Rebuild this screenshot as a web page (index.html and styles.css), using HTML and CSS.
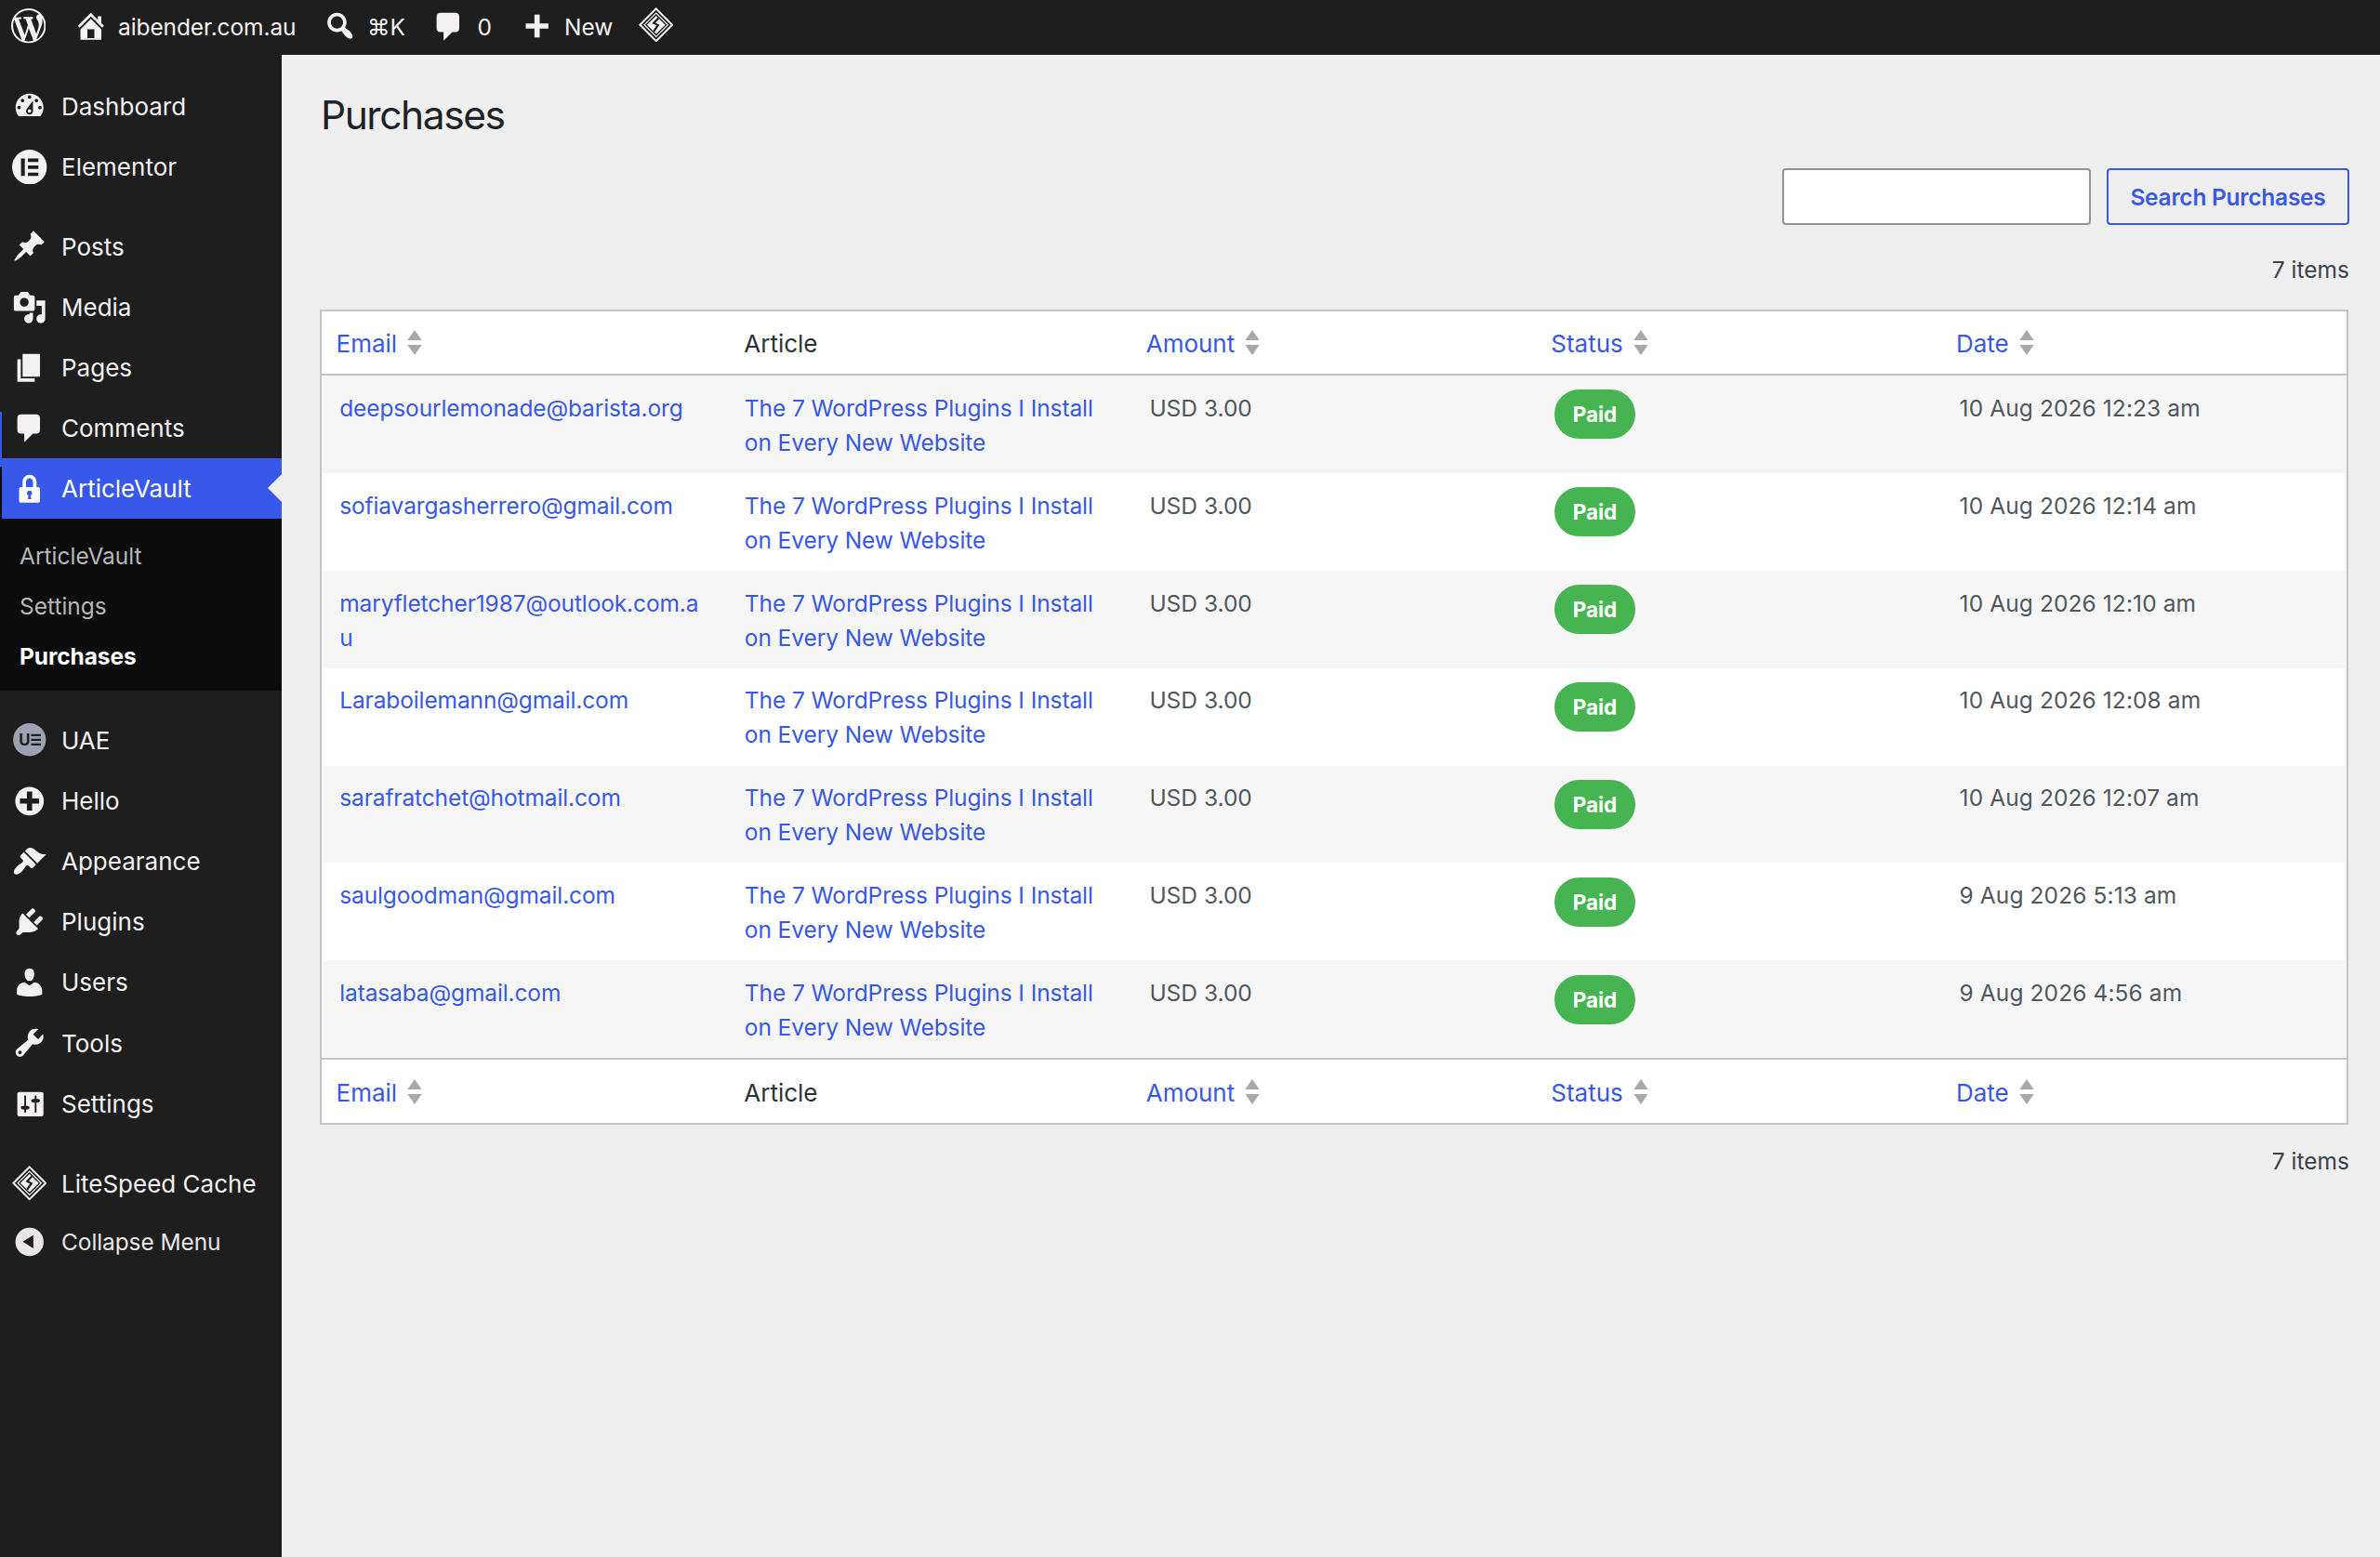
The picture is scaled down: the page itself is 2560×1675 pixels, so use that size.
FILE: index.html
```html
<!DOCTYPE html>
<html lang="en">
<head>
  <meta charset="UTF-8">
  <meta name="viewport" content="width=device-width, initial-scale=1.0">
  <title>Purchases</title>
  <link rel="stylesheet" href="styles.css">
</head>
<body>
  <svg class="sprite">
    <symbol id="i-wordpress" viewBox="0 0 20 20"><path d="M20 10c0-5.51-4.49-10-10-10C4.48 0 0 4.49 0 10c0 5.52 4.48 10 10 10 5.51 0 10-4.48 10-10zM7.78 15.37L4.37 6.22c.55-.02 1.17-.08 1.17-.08.5-.06.44-1.13-.06-1.11 0 0-1.45.11-2.37.11-.18 0-.37 0-.58-.01C4.12 2.69 6.87 1.11 10 1.11c2.33 0 4.45.87 6.05 2.34-.68-.11-1.65.39-1.65 1.58 0 .74.45 1.36.9 2.1.35.61.55 1.36.55 2.46 0 1.49-1.4 5-1.4 5l-3.03-8.37c.54-.02.82-.17.82-.17.5-.05.44-1.25-.06-1.22 0 0-1.44.12-2.38.12-.87 0-2.33-.12-2.33-.12-.5-.03-.56 1.2-.06 1.22l.92.08 1.26 3.41zM17.41 10c.24-.64.74-1.87.43-4.25.7 1.29 1.05 2.71 1.05 4.25 0 3.29-1.73 6.24-4.4 7.78.97-2.59 1.94-5.2 2.92-7.78zM6.1 18.09C3.12 16.65 1.11 13.53 1.11 10c0-1.3.23-2.48.72-3.59C3.25 10.3 4.67 14.2 6.1 18.09zm4.03-6.63l2.58 6.98c-.86.29-1.76.45-2.71.45-.79 0-1.57-.11-2.29-.33.81-2.38 1.62-4.74 2.42-7.1z"/></symbol>
    <symbol id="i-home" viewBox="0 0 20 20"><path d="M16 8.5l1.53 1.53-1.06 1.06L10 4.6l-6.47 6.49-1.06-1.06L10 2.5l4 4v-2h2v4zm-6-2.46l6 5.99V18H4v-5.97zM12 17v-5H8v5h4z"/></symbol>
    <symbol id="i-search" viewBox="0 0 20 20"><path d="M12.14 4.18c1.87 1.87 2.11 4.75.72 6.89.12.1.22.21.36.31.2.16.47.36.81.59.34.24.56.39.66.47.42.31.73.57.94.78.32.32.6.65.84 1 .25.35.44.69.59 1.04.14.35.21.68.18 1-.02.32-.14.59-.36.81s-.49.34-.81.36c-.31.02-.65-.04-.99-.19-.35-.14-.7-.34-1.04-.59-.35-.24-.68-.52-1-.84-.21-.21-.47-.52-.77-.93-.1-.13-.25-.35-.47-.66-.22-.32-.4-.57-.56-.78-.16-.2-.29-.35-.44-.5-2.07 1.09-4.69.76-6.44-.98-2.14-2.15-2.14-5.64 0-7.78 2.15-2.15 5.63-2.15 7.78 0zm-1.41 6.36c1.36-1.37 1.36-3.58 0-4.95-1.37-1.37-3.59-1.37-4.95 0-1.37 1.37-1.37 3.58 0 4.95 1.36 1.37 3.58 1.37 4.95 0z"/></symbol>
    <symbol id="i-comment" viewBox="0 0 20 20"><path d="M5 2h9c1.1 0 2 .9 2 2v7c0 1.1-.9 2-2 2h-2l-5 5v-5H5c-1.1 0-2-.9-2-2V4c0-1.1.9-2 2-2z"/></symbol>
    <symbol id="i-plus" viewBox="0 0 20 20"><path d="M17 7v3h-5v5H9v-5H4V7h5V2h3v5h5z"/></symbol>
    <symbol id="i-litespeed" viewBox="0 0 38 38">
      <path d="M19 1.4L36.6 19 19 36.6 1.4 19z" fill="none" stroke="currentColor" stroke-width="2.1"/>
      <path d="M19 6.2L31.8 19 19 31.8 6.2 19z" fill="none" stroke="currentColor" stroke-width="1.3"/>
      <path d="M19 9L29 19 19 29 9 19z"/>
      <path d="M21.6 11.6l-5.2 5.3 4.6 2.4-4.6 7" fill="none" stroke="#1e1e1e" stroke-width="2.2"/>
    </symbol>
    <symbol id="i-dashboard" viewBox="0 0 20 20"><path d="M3.76 16h12.48c1.1-1.37 1.76-3.11 1.76-5 0-4.42-3.58-8-8-8s-8 3.58-8 8c0 1.89.66 3.63 1.76 5zM10 4c.55 0 1 .45 1 1s-.45 1-1 1-1-.45-1-1 .45-1 1-1zM6 6c.55 0 1 .45 1 1s-.45 1-1 1-1-.45-1-1 .45-1 1-1zm8 0c.55 0 1 .45 1 1s-.45 1-1 1-1-.45-1-1 .45-1 1-1zm-5.37 5.55L12 7v6c0 1.1-.9 2-2 2s-2-.9-2-2c0-.57.24-1.08.63-1.45zM4 10c.55 0 1 .45 1 1s-.45 1-1 1-1-.45-1-1 .45-1 1-1zm12 0c.55 0 1 .45 1 1s-.45 1-1 1-1-.45-1-1 .45-1 1-1zm-5 3c0-.55-.45-1-1-1s-1 .45-1 1 .45 1 1 1 1-.45 1-1z"/></symbol>
    <symbol id="i-elementor" viewBox="0 0 38 38">
      <circle cx="19" cy="19" r="19"/>
      <path d="M9.7 9.7h4.2v19H9.7zM17.3 9.7h11.4v3.7H17.3zM17.3 17.3h11.4V21H17.3zM17.3 25h11.4v3.7H17.3z" fill="#1e1e1e"/>
    </symbol>
    <symbol id="i-post" viewBox="0 0 20 20"><path d="M10.44 3.02l1.82-1.82 6.36 6.35-1.83 1.82c-1.05-.68-2.48-.57-3.41.36l-.75.75c-.92.93-1.04 2.35-.35 3.41l-1.83 1.82-2.41-2.41-2.8 2.79c-.42.42-3.38 2.71-3.8 2.29s1.86-3.39 2.28-3.81l2.79-2.79L4.1 9.36l1.83-1.82c1.05.69 2.48.57 3.4-.36l.75-.75c.93-.92 1.05-2.35.36-3.41z"/></symbol>
    <symbol id="i-media" viewBox="0 0 20 20"><path d="M13 11V4c0-.55-.45-1-1-1h-1.67L9 1H5L3.67 3H2c-.55 0-1 .45-1 1v7c0 .55.45 1 1 1h10c.55 0 1-.45 1-1zM7 4.5c1.38 0 2.5 1.12 2.5 2.5S8.38 9.5 7 9.5 4.5 8.38 4.5 7 5.62 4.5 7 4.5zM14 6h5v10.5c0 1.38-1.12 2.5-2.5 2.5S14 17.88 14 16.5s1.12-2.5 2.5-2.5c.17 0 .34.02.5.05V9h-3V6zm-4 8.05V13h2v3.5c0 1.38-1.12 2.5-2.5 2.5S7 17.88 7 16.5 8.12 14 9.5 14c.17 0 .34.02.5.05z"/></symbol>
    <symbol id="i-page" viewBox="0 0 20 20"><path d="M6 15V2h10v13H6zm-1 1h8v2H3V5h2v11z"/></symbol>
    <symbol id="i-lock" viewBox="0 0 20 20"><path d="M14 9h1c.55 0 1 .45 1 1v7c0 .55-.45 1-1 1H5c-.55 0-1-.45-1-1v-7c0-.55.45-1 1-1h1V6c0-2.21 1.79-4 4-4s4 1.79 4 4v3zm-2 0V6c0-1.1-.9-2-2-2s-2 .9-2 2v3h4zm-1 7l-.36-2.15c.51-.24.86-.75.86-1.35 0-.83-.67-1.5-1.5-1.5s-1.5.67-1.5 1.5c0 .6.35 1.11.86 1.35L9 16h2z"/></symbol>
    <symbol id="i-uae" viewBox="0 0 38 38">
      <circle cx="19" cy="19" r="17.9" fill="#9ca2b0"/>
      <text x="7.3" y="25.4" fill="#1e1e1e" font-family="Inter, sans-serif" font-size="17" font-weight="700">U</text>
      <path d="M20.8 13h10.6v2.3H20.8zM20.8 18h10.6v2.3H20.8zM20.8 23.1h10.6v2.3H20.8z" fill="#1e1e1e"/>
    </symbol>
    <symbol id="i-plus-alt" viewBox="0 0 20 20"><path d="M15.8 4.2c3.2 3.21 3.2 8.39 0 11.6-3.21 3.2-8.39 3.2-11.6 0C1 12.59 1 7.41 4.2 4.2 7.41 1 12.59 1 15.8 4.2zm-4.3 11.3v-4h4v-3h-4v-4h-3v4h-4v3h4v4h3z"/></symbol>
    <symbol id="i-appearance" viewBox="0 0 20 20"><path d="M14.48 11.06L7.41 3.99l1.5-1.5c.5-.56 2.3-.47 3.51.32 1.21.8 1.43 1.28 2.91 2.1 1.18.64 2.45 1.26 4.45.85zm-.71.71L6.7 4.7 4.93 6.47c-.39.39-.39 1.02 0 1.41l1.06 1.06c.39.39.39 1.03 0 1.42-.6.6-1.43 1.11-2.21 1.69-.35.26-.7.53-1.01.84C1.43 14.23.4 16.08 1.4 17.07c.99 1 2.84-.03 4.18-1.36.31-.31.58-.66.85-1.02.57-.78 1.08-1.61 1.69-2.21.39-.39 1.02-.39 1.41 0l1.06 1.06c.39.39 1.02.39 1.41 0z"/></symbol>
    <symbol id="i-plugins" viewBox="0 0 20 20"><path d="M13.11 4.36L9.87 7.6 8 5.73l3.24-3.24c.35-.34 1.05-.2 1.56.32.52.51.66 1.21.31 1.55zm-8 1.77l.91-1.12 9.01 9.01-1.19.84c-.71.71-2.63 1.16-3.82 1.16H6.14L4.9 17.26c-.59.59-1.54.59-2.12 0-.59-.58-.59-1.53 0-2.12l1.24-1.24v-3.88c0-1.13.4-3.19 1.09-3.89zm7.26 3.97l3.24-3.24c.34-.35 1.04-.21 1.55.31.52.51.66 1.21.31 1.55l-3.24 3.25z"/></symbol>
    <symbol id="i-users" viewBox="0 0 20 20"><path d="M10 9.25c-2.27 0-2.73-3.44-2.73-3.44C7 4.02 7.82 2 9.97 2c2.16 0 2.98 2.02 2.71 3.81 0 0-.41 3.44-2.68 3.44zm0 2.57L12.72 10c2.39 0 4.52 2.33 4.52 4.53v2.49s-3.65 1.13-7.24 1.13c-3.65 0-7.24-1.13-7.24-1.13v-2.49c0-2.25 1.94-4.48 4.47-4.48z"/></symbol>
    <symbol id="i-tools" viewBox="0 0 20 20"><path d="M16.68 9.77c-1.34 1.34-3.3 1.67-4.95.99l-5.41 6.52c-.99.99-2.59.99-3.58 0s-.99-2.59 0-3.57l6.52-5.42c-.68-1.65-.35-3.61.99-4.95 1.28-1.28 3.12-1.62 4.72-1.06l-2.89 2.89 2.82 2.82 2.86-2.87c.53 1.58.18 3.39-1.08 4.65zM3.81 16.21c.4.39 1.04.39 1.43 0 .4-.4.4-1.04 0-1.43-.39-.4-1.03-.4-1.43 0-.39.39-.39 1.03 0 1.43z"/></symbol>
    <symbol id="i-settings" viewBox="0 0 20 20"><path d="M18 16V4c0-.55-.45-1-1-1H4c-.55 0-1 .45-1 1v12c0 .55.45 1 1 1h13c.55 0 1-.45 1-1zM8 11h1c.55 0 1 .45 1 1s-.45 1-1 1H8v1.5c0 .28-.22.5-.5.5s-.5-.22-.5-.5V13H6c-.55 0-1-.45-1-1s.45-1 1-1h1V5.5c0-.28.22-.5.5-.5s.5.22.5.5V11zm5-2h-1c-.55 0-1-.45-1-1s.45-1 1-1h1V5.5c0-.28.22-.5.5-.5s.5.22.5.5V7h1c.55 0 1 .45 1 1s-.45 1-1 1h-1v5.5c0 .28-.22.5-.5.5s-.5-.22-.5-.5V9z"/></symbol>
    <symbol id="i-collapse" viewBox="0 0 20 20"><path fill-rule="evenodd" d="M10 2a8.1 8.1 0 1 1 0 16.2A8.1 8.1 0 0 1 10 2zm2.2 4.2L6.1 10l6.1 3.9z"/></symbol>
    <symbol id="i-sort" viewBox="0 0 16 28"><path d="M8 0l8 11.5H0zM8 28l8-11.5H0z"/></symbol>
  </svg>

  <div class="topbar">
    <a class="bar-item bar-logo"><svg class="icon"><use href="#i-wordpress"/></svg></a>
    <a class="bar-item bar-site"><svg class="icon"><use href="#i-home"/></svg><span>aibender.com.au</span></a>
    <a class="bar-item bar-search"><svg class="icon"><use href="#i-search"/></svg><span>⌘K</span></a>
    <a class="bar-item bar-comments"><svg class="icon"><use href="#i-comment"/></svg><span>0</span></a>
    <a class="bar-item bar-new"><svg class="icon"><use href="#i-plus"/></svg><span>New</span></a>
    <a class="bar-item bar-cache"><svg class="icon"><use href="#i-litespeed"/></svg></a>
  </div>

  <div class="layout">
    <nav class="menu">
      <a class="menu-item"><svg class="icon"><use href="#i-dashboard"/></svg><span>Dashboard</span></a>
      <a class="menu-item"><svg class="icon"><use href="#i-elementor"/></svg><span>Elementor</span></a>
      <div class="separator"></div>
      <a class="menu-item"><svg class="icon"><use href="#i-post"/></svg><span>Posts</span></a>
      <a class="menu-item"><svg class="icon"><use href="#i-media"/></svg><span>Media</span></a>
      <a class="menu-item"><svg class="icon"><use href="#i-page"/></svg><span>Pages</span></a>
      <a class="menu-item"><svg class="icon"><use href="#i-comment"/></svg><span>Comments</span></a>
      <a class="menu-item active"><svg class="icon"><use href="#i-lock"/></svg><span>ArticleVault</span></a>
      <div class="submenu">
        <a>ArticleVault</a>
        <a>Settings</a>
        <a class="current">Purchases</a>
      </div>
      <div class="separator"></div>
      <a class="menu-item"><svg class="icon"><use href="#i-uae"/></svg><span>UAE</span></a>
      <a class="menu-item"><svg class="icon"><use href="#i-plus-alt"/></svg><span>Hello</span></a>
      <a class="menu-item"><svg class="icon"><use href="#i-appearance"/></svg><span>Appearance</span></a>
      <a class="menu-item"><svg class="icon"><use href="#i-plugins"/></svg><span>Plugins</span></a>
      <a class="menu-item"><svg class="icon"><use href="#i-users"/></svg><span>Users</span></a>
      <a class="menu-item"><svg class="icon"><use href="#i-tools"/></svg><span>Tools</span></a>
      <a class="menu-item"><svg class="icon"><use href="#i-settings"/></svg><span>Settings</span></a>
      <div class="separator"></div>
      <a class="menu-item"><svg class="icon"><use href="#i-litespeed"/></svg><span>LiteSpeed Cache</span></a>
      <a class="menu-item collapse"><svg class="icon"><use href="#i-collapse"/></svg><span>Collapse Menu</span></a>
    </nav>

    <main class="content">
      <h1>Purchases</h1>

      <div class="search-box">
        <input type="text" class="search-input">
        <button class="button">Search Purchases</button>
      </div>

      <div class="count">7 items</div>

      <table class="list">
        <thead>
          <tr>
            <th class="sortable"><a>Email <svg class="sort"><use href="#i-sort"/></svg></a></th>
            <th>Article</th>
            <th class="sortable"><a>Amount <svg class="sort"><use href="#i-sort"/></svg></a></th>
            <th class="sortable"><a>Status <svg class="sort"><use href="#i-sort"/></svg></a></th>
            <th class="sortable"><a>Date <svg class="sort"><use href="#i-sort"/></svg></a></th>
          </tr>
        </thead>
        <tbody>
          <tr>
            <td class="email"><a>deepsourlemonade@barista.org</a></td>
            <td class="article"><a>The 7 WordPress Plugins I Install<br>on Every New Website</a></td>
            <td>USD 3.00</td>
            <td><span class="badge">Paid</span></td>
            <td class="date">10 Aug 2026 12:23 am</td>
          </tr>
          <tr>
            <td class="email"><a>sofiavargasherrero@gmail.com</a></td>
            <td class="article"><a>The 7 WordPress Plugins I Install<br>on Every New Website</a></td>
            <td>USD 3.00</td>
            <td><span class="badge">Paid</span></td>
            <td class="date">10 Aug 2026 12:14 am</td>
          </tr>
          <tr>
            <td class="email"><a>maryfletcher1987@outlook.com.a<br>u</a></td>
            <td class="article"><a>The 7 WordPress Plugins I Install<br>on Every New Website</a></td>
            <td>USD 3.00</td>
            <td><span class="badge">Paid</span></td>
            <td class="date">10 Aug 2026 12:10 am</td>
          </tr>
          <tr>
            <td class="email"><a>Laraboilemann@gmail.com</a></td>
            <td class="article"><a>The 7 WordPress Plugins I Install<br>on Every New Website</a></td>
            <td>USD 3.00</td>
            <td><span class="badge">Paid</span></td>
            <td class="date">10 Aug 2026 12:08 am</td>
          </tr>
          <tr>
            <td class="email"><a>sarafratchet@hotmail.com</a></td>
            <td class="article"><a>The 7 WordPress Plugins I Install<br>on Every New Website</a></td>
            <td>USD 3.00</td>
            <td><span class="badge">Paid</span></td>
            <td class="date">10 Aug 2026 12:07 am</td>
          </tr>
          <tr>
            <td class="email"><a>saulgoodman@gmail.com</a></td>
            <td class="article"><a>The 7 WordPress Plugins I Install<br>on Every New Website</a></td>
            <td>USD 3.00</td>
            <td><span class="badge">Paid</span></td>
            <td class="date">9 Aug 2026 5:13 am</td>
          </tr>
          <tr>
            <td class="email"><a>latasaba@gmail.com</a></td>
            <td class="article"><a>The 7 WordPress Plugins I Install<br>on Every New Website</a></td>
            <td>USD 3.00</td>
            <td><span class="badge">Paid</span></td>
            <td class="date">9 Aug 2026 4:56 am</td>
          </tr>
        </tbody>
        <tfoot>
          <tr>
            <th class="sortable"><a>Email <svg class="sort"><use href="#i-sort"/></svg></a></th>
            <th>Article</th>
            <th class="sortable"><a>Amount <svg class="sort"><use href="#i-sort"/></svg></a></th>
            <th class="sortable"><a>Status <svg class="sort"><use href="#i-sort"/></svg></a></th>
            <th class="sortable"><a>Date <svg class="sort"><use href="#i-sort"/></svg></a></th>
          </tr>
        </tfoot>
      </table>

      <div class="count count-bottom">7 items</div>
    </main>
  </div>
</body>
</html>
```

FILE: styles.css
```css
* {
  box-sizing: border-box;
}

body {
  margin: 0;
  font-family: Inter, "Noto Sans", sans-serif;
  font-size: 24.5px;
  line-height: 37px;
  background-color: #efefef;
  color: #3c434a;
}

.sprite {
  display: none;
}

.icon {
  width: 37.5px;
  height: 37.5px;
  flex: none;
  fill: currentColor;
}

/* top bar */
.topbar {
  display: flex;
  height: 59px;
  padding-left: 11.5px;
  background-color: #1e1e1e;
  color: #f3f1f1;
}

.bar-item {
  display: flex;
  align-items: center;
  gap: 12px;
  height: 56px;
}

.bar-item span {
  padding-top: 2px;
}

.bar-logo {
  width: 67px;
}

.bar-site {
  width: 268.5px;
  gap: 11px;
}

.bar-site span {
  letter-spacing: -0.1px;
}

.bar-search {
  width: 117px;
}

.bar-search span {
  margin-left: -1.5px;
}

.bar-comments {
  width: 93.5px;
}

.bar-comments .icon {
  margin-top: 2px;
}

.bar-new {
  width: 129.5px;
}

.bar-new .icon {
  margin-top: 6px;
}

.bar-cache {
  padding-bottom: 3px;
}

/* side menu */
.layout {
  display: flex;
  min-height: 1616px;
}

.menu {
  width: 303px;
  flex: none;
  padding-top: 22.5px;
  background-color: #1e1e1e;
  color: #f3f1f1;
}

.menu-item {
  display: flex;
  align-items: center;
  gap: 15.5px;
  height: 65.2px;
  padding-left: 13px;
  font-size: 26px;
}

.separator {
  height: 20.6px;
}

.menu-item.active {
  position: relative;
  background-color: #3858e9;
  color: #fff;
}

.menu-item.active::before {
  content: "";
  position: absolute;
  left: 0;
  top: -50px;
  width: 2px;
  height: 222px;
  background: linear-gradient(#3858e9 59px, #0c0c0c 59px);
}

.menu-item.active::after {
  content: "";
  position: absolute;
  right: 0;
  top: 17px;
  border: 15.5px solid transparent;
  border-left: none;
  border-right-color: #efefef;
}

.submenu {
  display: flex;
  flex-direction: column;
  height: 184.6px;
  padding: 12.4px 0 0 21px;
  background-color: #0c0c0c;
  color: #b7b7b7;
}

.submenu a {
  line-height: 54px;
}

.submenu .current {
  color: #fff;
  font-weight: 700;
  letter-spacing: -0.1px;
}

.menu-item.collapse {
  height: 61px;
  font-size: 24.5px;
  letter-spacing: -0.1px;
  color: #e8e6e6;
}

/* content */
.content {
  flex: 1;
  padding: 39px 33px 0 41px;
}

h1 {
  margin: 0 0 0 1px;
  font-size: 42.5px;
  line-height: 51px;
  font-weight: 400;
  letter-spacing: -1.45px;
  color: #1d2327;
}

.search-box {
  display: flex;
  justify-content: flex-end;
  gap: 17px;
  margin-top: 32px;
}

.search-input {
  width: 332px;
  height: 61px;
  border: 2px solid #949494;
  border-radius: 4px;
  background-color: #fff;
}

.button {
  width: 261px;
  height: 61px;
  padding: 0;
  border: 2px solid #3858e9;
  border-radius: 4px;
  background: none;
  color: #3858e9;
  font-family: inherit;
  font-size: 24.5px;
  font-weight: 600;
  letter-spacing: -0.25px;
}

.count {
  margin-top: 30px;
  text-align: right;
}

.count-bottom {
  margin-top: 21px;
}

.list {
  width: 2182px;
  margin-top: 24px;
  table-layout: fixed;
  border: 2px solid #c3c4c7;
  border-spacing: 0;
  background-color: #fff;
  color: #50575e;
}

.list th {
  height: 69px;
  padding: 2px 18.7px 0;
  border-bottom: 2px solid #c3c4c7;
  text-align: left;
  font-size: 26px;
  font-weight: 400;
  color: #2c3338;
}

.list tfoot th {
  height: 70px;
  border-top: 2px solid #c3c4c7;
  border-bottom: none;
}

.list th.sortable {
  padding-left: 15.5px;
}

.list th a {
  display: flex;
  align-items: center;
  gap: 11px;
}

.sort {
  width: 16px;
  height: 27px;
  margin-top: -2px;
  fill: #a7aaad;
}

.list td {
  height: 104.9px;
  padding: 16.8px 18.7px 0 19.2px;
  vertical-align: top;
}

.list tbody tr:nth-child(odd) {
  background-color: #f6f6f6;
}

.list a {
  color: #3858e9;
}

.list .email {
  letter-spacing: -0.12px;
}

.list .article {
  letter-spacing: -0.08px;
}

.list .date {
  letter-spacing: 0.1px;
}

.badge {
  display: block;
  width: 87px;
  height: 53px;
  margin-top: -1.4px;
  border-radius: 27px;
  background-color: #46b450;
  color: #fff;
  font-size: 22.5px;
  line-height: 53px;
  font-weight: 700;
  text-align: center;
}
```
